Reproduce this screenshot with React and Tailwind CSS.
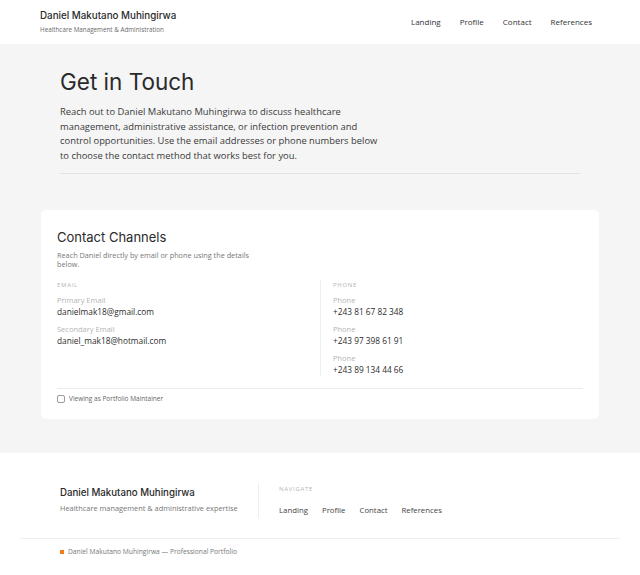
import React from "react";

const body = { fontFamily: '"Open Sans", "Noto Sans", sans-serif' };
const head = { fontFamily: 'Inter, "Noto Sans", sans-serif' };

const navLinks = ["Landing", "Profile", "Contact", "References"];

const emails = [
  { label: "Primary Email", value: "danielmak18@gmail.com" },
  { label: "Secondary Email", value: "daniel_mak18@hotmail.com" },
];

const phones = ["+243 81 67 82 348", "+243 97 398 61 91", "+243 89 134 44 66"];

const Entry = ({ label, value }) => (
  <div className="flex flex-col">
    <span className="text-[7.5px] leading-[10px] text-[#b5b5b5]">{label}</span>
    <span className="text-[8.3px] leading-[13px] text-[#2c2c2c]">{value}</span>
  </div>
);

export default function App() {
  return (
    <div className="min-h-screen bg-white text-[#2a2a2a]" style={body}>
      {/* Header */}
      <header className="h-[44px] bg-white flex items-center justify-between pl-[40px] pr-[48px]">
        <div className="flex flex-col">
          <span className="text-[9.8px] leading-[14px] text-[#2b2b2b] font-medium" style={head}>
            Daniel Makutano Muhingirwa
          </span>
          <span className="text-[6.3px] leading-[10px] text-[#6b6b6b] mt-[2px]">
            Healthcare Management &amp; Administration
          </span>
        </div>
        <nav className="flex items-center gap-[19px] text-[8px] text-[#333] font-medium">
          {navLinks.map((l) => (
            <span key={l}>{l}</span>
          ))}
        </nav>
      </header>

      {/* Main */}
      <main className="bg-[#f5f5f5] pt-[23px] pb-[34px]">
        <section className="px-[60px]">
          <h1 className="text-[22.5px] leading-[30px] text-[#2a2a2a]" style={head}>
            Get in Touch
          </h1>
          <p className="mt-[8px] w-[325px] text-[9.4px] leading-[14.5px] text-[#3a3a3a]">
            Reach out to Daniel Makutano Muhingirwa to discuss healthcare management,
            administrative assistance, or infection prevention and control opportunities.
            Use the email addresses or phone numbers below to choose the contact method
            that works best for you.
          </p>
          <div className="mt-[10px] h-px bg-[#e2e2e2] w-[520px]" />
        </section>

        <section className="mt-[36px] mx-[41px] bg-white rounded-[5px] px-[16px] pt-[18px] pb-[15px]">
          <h2 className="text-[13px] leading-[18px] text-[#2a2a2a]" style={head}>
            Contact Channels
          </h2>
          <p className="mt-[5px] w-[205px] text-[7.3px] leading-[8.5px] text-[#777]">
            Reach Daniel directly by email or phone using the details below.
          </p>

          <div className="mt-[12px] grid grid-cols-2">
            <div className="pr-[12px]">
              <div className="text-[6px] tracking-[0.12em] text-[#b5b5b5] leading-[10px]">EMAIL</div>
              <div className="mt-[5px] flex flex-col gap-[6px]">
                {emails.map((e) => (
                  <Entry key={e.label} label={e.label} value={e.value} />
                ))}
              </div>
            </div>
            <div className="border-l border-[#eeeeee] pl-[12px]">
              <div className="text-[6px] tracking-[0.12em] text-[#b5b5b5] leading-[10px]">PHONE</div>
              <div className="mt-[5px] flex flex-col gap-[6px]">
                {phones.map((p) => (
                  <Entry key={p} label="Phone" value={p} />
                ))}
              </div>
            </div>
          </div>

          <div className="mt-[12px] border-t border-[#ececec] pt-[5px] flex items-center gap-[4px]">
            <span className="w-[8px] h-[8px] border border-[#9a9a9a] rounded-[2px] bg-white" />
            <span className="text-[6.5px] text-[#666]">Viewing as Portfolio Maintainer</span>
          </div>
        </section>
      </main>

      {/* Footer */}
      <footer className="bg-white px-[20px] pt-[30px]">
        <div className="flex items-stretch px-[40px]">
          <div className="w-[198px] pt-[3px]">
            <div className="text-[9.7px] leading-[14px] text-[#2a2a2a] font-medium" style={head}>
              Daniel Makutano Muhingirwa
            </div>
            <div className="mt-[3px] text-[7.4px] text-[#777]">
              Healthcare management &amp; administrative expertise
            </div>
          </div>
          <div className="border-l border-[#eeeeee] pl-[20px] pb-[2px]">
            <div className="text-[6px] tracking-[0.12em] text-[#b5b5b5] leading-[10px] pt-[1px]">NAVIGATE</div>
            <div className="mt-[11px] flex gap-[14px] text-[7.8px] text-[#444] font-medium">
              {navLinks.map((l) => (
                <span key={l}>{l}</span>
              ))}
            </div>
          </div>
        </div>
        <div className="mt-[20px] border-t border-[#f0f0f0] px-[40px] pt-[8px] pb-[14px] flex items-center gap-[4px]">
          <span className="w-[4px] h-[4px] bg-[#f07c1b]" />
          <span className="text-[6.7px] text-[#777]">Daniel Makutano Muhingirwa — Professional Portfolio</span>
        </div>
      </footer>
    </div>
  );
}
